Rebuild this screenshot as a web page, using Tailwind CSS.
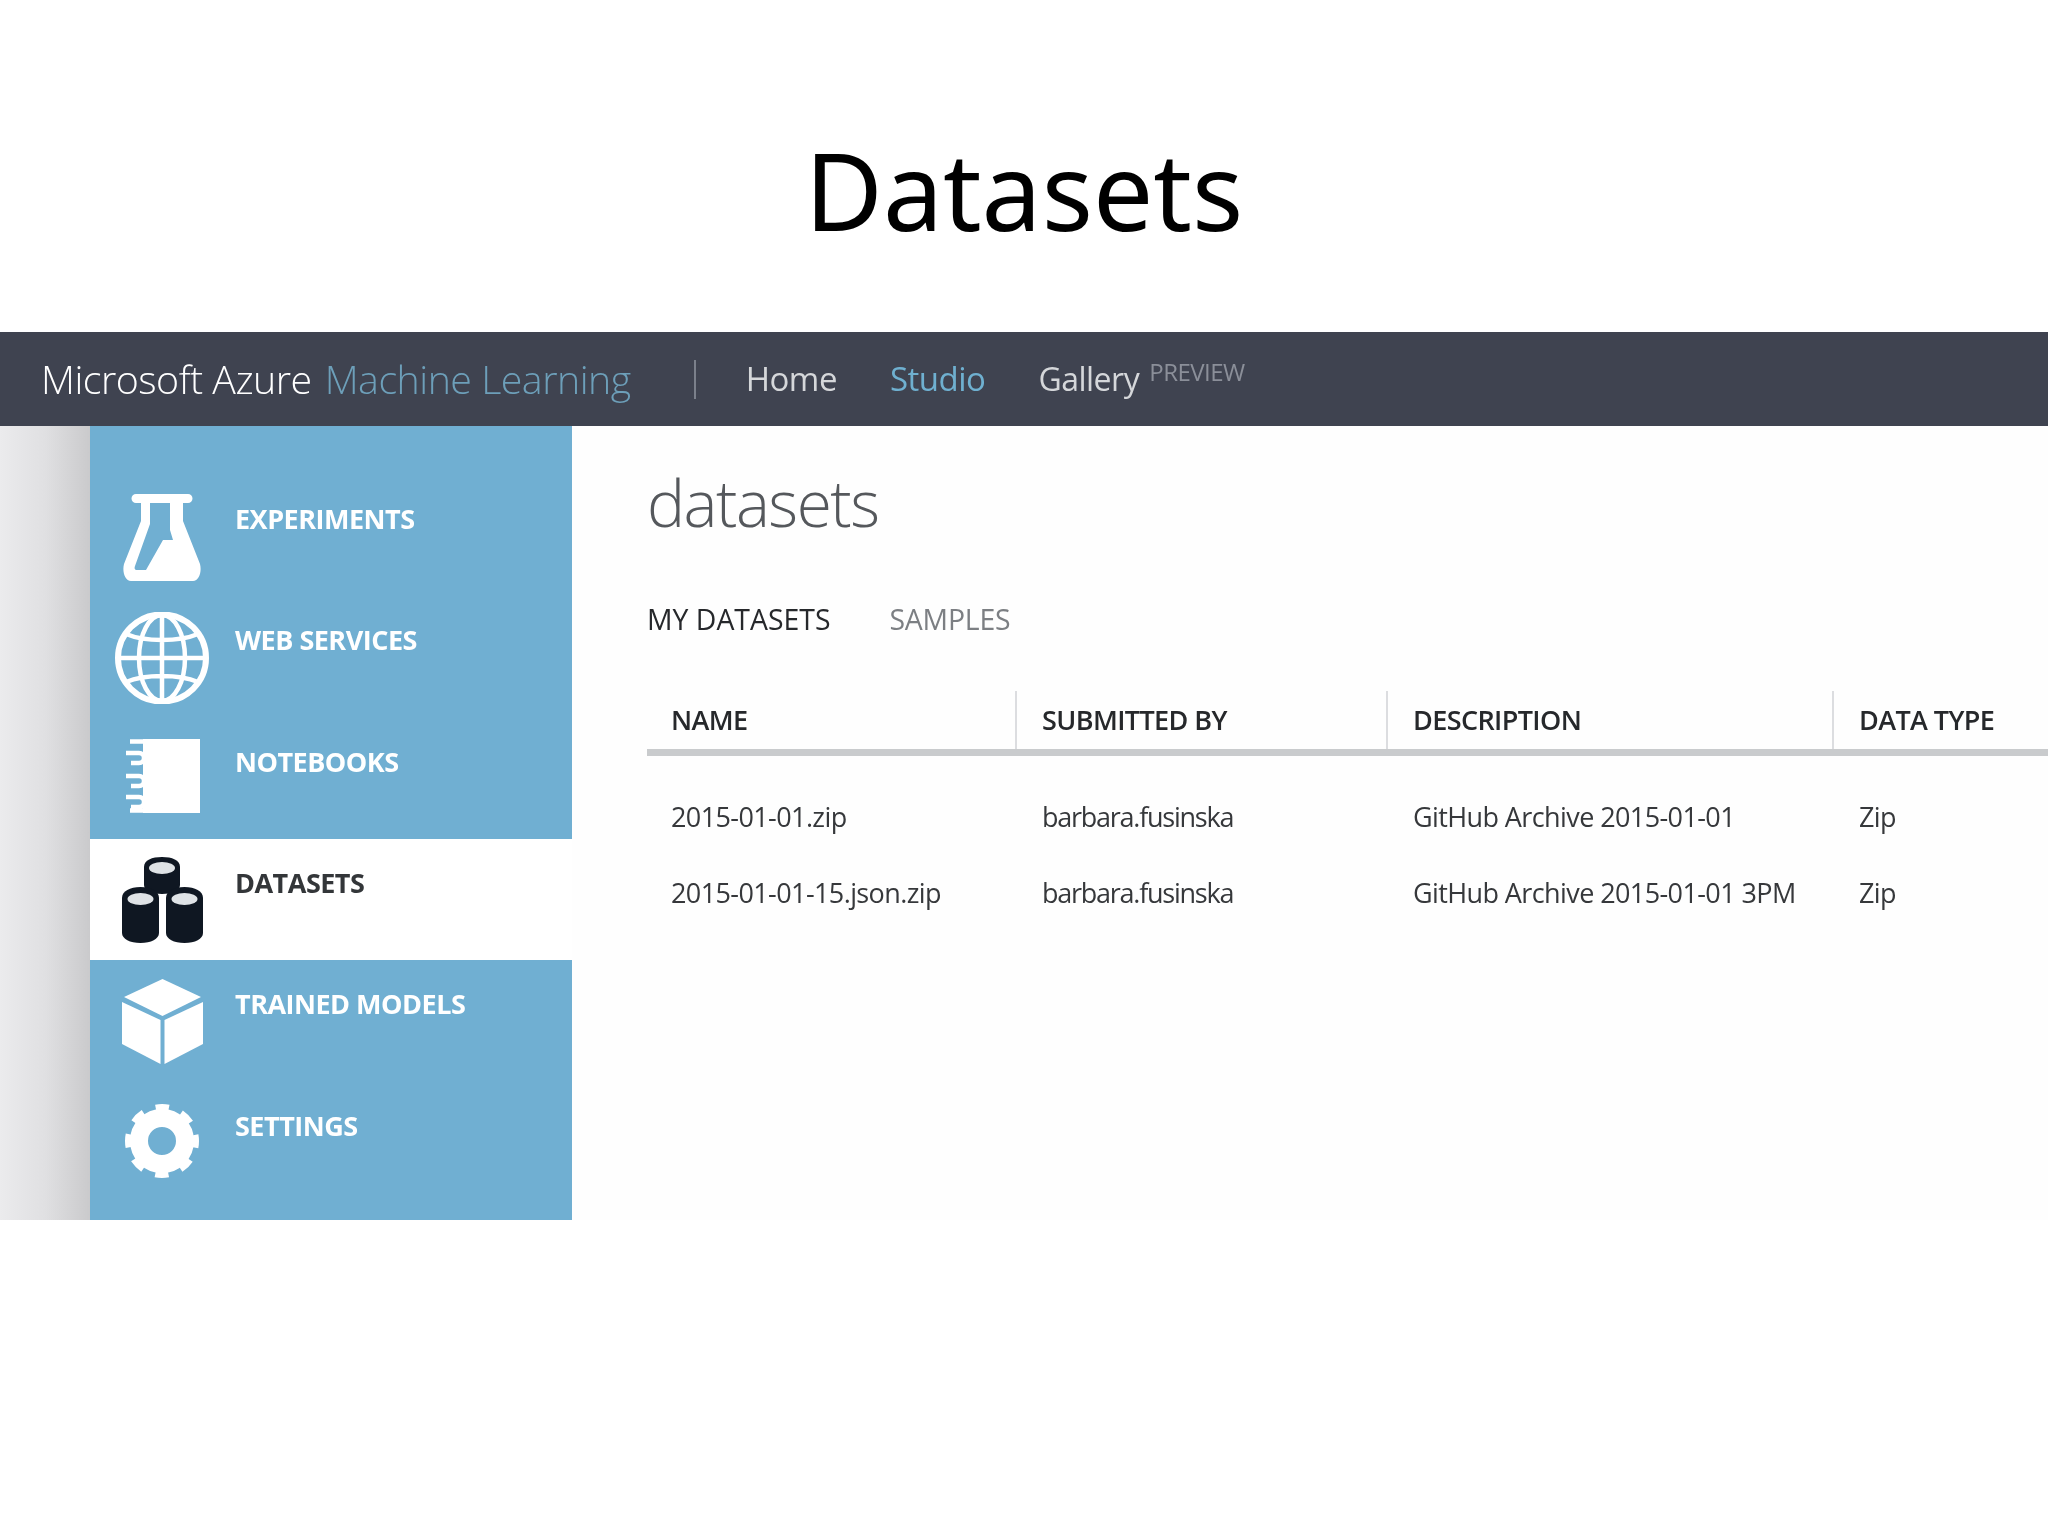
<!DOCTYPE html>
<html lang="en">
<head>
  <meta charset="UTF-8" />
  <title>Datasets</title>
  <script src="https://cdn.jsdelivr.net/npm/@tailwindcss/browser@4"></script>
</head>
<body class="bg-white w-[2048px] h-[1536px] overflow-hidden font-['Open_Sans',sans-serif]">

  <!-- slide title -->
  <header class="h-[332px] flex justify-center pt-[125px]">
    <h1 class="text-[107px] leading-[130px] text-black font-['Noto_Sans',sans-serif]">Datasets</h1>
  </header>

  <div class="blur-[0.6px]">
  <!-- top bar -->
  <nav class="h-[94px] bg-[#3f4350] flex items-center pl-[41px] text-[39.300px] font-light tracking-[-0.5px]">
    <span class="text-white">Microsoft Azure</span>
    <span class="ml-[13px] text-[#6d9fb9]">Machine Learning</span>
    <span class="ml-[63px] w-[2px] h-[39px] bg-[#7b808b]"></span>
    <span class="ml-[50px] text-[33px] font-normal text-[#d5d7da]">Home</span>
    <span class="ml-[53px] text-[33px] font-normal text-[#6fb0d0]">Studio</span>
    <span class="ml-[53px] text-[32px] font-normal text-[#d5d7da]">Gallery</span>
    <span class="ml-[10px] mb-[14px] text-[24px] font-normal text-[#8b8f99]">PREVIEW</span>
  </nav>

  <div class="flex h-[794px]">
    <div class="w-[90px] bg-linear-to-r from-[#ebebed] via-[#e0e0e2] to-[#cacacc]"></div>

    <!-- sidebar -->
    <aside class="w-[482px] bg-[#70afd2] pt-[49px] font-bold text-[27px] tracking-[-0.5px] text-white">
      <a class="h-[121px] flex items-start">
        <span class="w-[100px] h-[104px] mt-[10px] ml-[22px] flex items-center justify-center">
          <svg width="78" height="87" viewBox="0 0 78 87"><path fill="#fff" fill-rule="evenodd" d="M13 0H65a4 4 0 0 1 0 9H60V27L77 70c2 8-1 17-7 17H8c-6 0-9-9-7-17L18 27V9H13a4 4 0 0 1 0-9ZM27 9V30L12 72c-1 3 0 4 2 4H23L40 46H50L47 36V9Z"/></svg>
        </span>
        <span class="ml-[23px] mt-[24px]">EXPERIMENTS</span>
      </a>
      <a class="h-[122px] flex items-start">
        <span class="w-[100px] h-[104px] mt-[10px] ml-[22px] flex items-center justify-center">
          <svg width="94" height="92" viewBox="0 0 94 92" fill="none" stroke="#fff" stroke-width="4.5"><ellipse cx="47" cy="46" rx="44" ry="43.5" stroke-width="6"/><ellipse cx="47" cy="46" rx="23" ry="43"/><path d="M47 3V89M3 46H91M11 22C30 30 64 30 83 22M11 70C30 62 64 62 83 70"/></svg>
        </span>
        <span class="ml-[23px] mt-[24px]">WEB SERVICES</span>
      </a>
      <a class="h-[121px] flex items-start">
        <span class="w-[100px] h-[104px] mt-[6px] ml-[22px] flex items-center justify-center">
          <svg width="76" height="74" viewBox="0 0 76 74"><rect x="19" width="57" height="74" fill="#fff"/><path fill="none" stroke="#fff" stroke-width="4.5" d="M6 2.500H20M2 14H15a5 5 0 0 1 0 10H7M2 37H15a5 5 0 0 1 0 10H7M2 58H15a5 5 0 0 1 0 10H7M6 71.500H20"/></svg>
        </span>
        <span class="ml-[23px] mt-[24px]">NOTEBOOKS</span>
      </a>
      <a class="h-[121px] bg-white text-[#333639] flex items-start">
        <span class="w-[100px] h-[104px] mt-[9px] ml-[22px] flex items-center justify-center">
          <svg width="81" height="86" viewBox="0 0 81 86">
            <path fill="#0f1722" d="M22 10C22 3 30 0 40 0S58 3 58 10V28C58 34 50 37 40 37S22 34 22 28Z"/>
            <ellipse cx="40" cy="11" rx="13" ry="6" fill="#dfe3e6"/>
            <path fill="#0f1722" d="M0 41C0 34 8 30 18.500 30S37 34 37 41V76C37 82 29 86 18.500 86S0 82 0 76Z"/>
            <ellipse cx="18.500" cy="42" rx="13" ry="6" fill="#dfe3e6"/>
            <path fill="#0f1722" d="M44 41C44 34 52 30 62.500 30S81 34 81 41V76C81 82 73 86 62.500 86S44 82 44 76Z"/>
            <ellipse cx="62.500" cy="42" rx="13" ry="6" fill="#dfe3e6"/>
          </svg>
        </span>
        <span class="ml-[23px] mt-[24px]">DATASETS</span>
      </a>
      <a class="h-[122px] flex items-start">
        <span class="w-[100px] h-[104px] mt-[9px] ml-[22px] flex items-center justify-center">
          <svg width="81" height="85" viewBox="0 0 81 85" fill="#fff"><path d="M40.500 0 79 18 40.500 37 2 18Z"/><path d="M0 23 38.500 41V85L0 65Z"/><path d="M81 23 42.500 41V85L81 65Z"/></svg>
        </span>
        <span class="ml-[23px] mt-[24px]">TRAINED MODELS</span>
      </a>
      <a class="h-[121px] flex items-start">
        <span class="w-[100px] h-[104px] mt-[7px] ml-[22px] flex items-center justify-center">
          <svg width="74" height="74" viewBox="0 0 74 74" fill="none" stroke="#fff"><circle cx="37" cy="37" r="23" stroke-width="18"/><circle cx="37" cy="37" r="31" stroke-width="12" stroke-dasharray="12.170 12.170" stroke-dashoffset="6"/></svg>
        </span>
        <span class="ml-[23px] mt-[24px]">SETTINGS</span>
      </a>
    </aside>

    <!-- main content -->
    <main class="flex-1 pl-[75px] bg-[#fefefe]">
      <h2 class="mt-[33px] text-[64px] leading-[88px] font-light text-[#55585c] tracking-[-1.5px]">datasets</h2>
      <div class="mt-[53px] flex text-[28.400px] leading-[38px]">
        <span class="text-[#26282b]">MY DATASETS</span>
        <span class="ml-[59px] text-[#7c7f83] tracking-[-0.2px]">SAMPLES</span>
      </div>
      <div class="mt-[53px]">
        <div class="grid grid-cols-[370px_371px_446px_1fr] h-[65px] border-b-[7px] border-[#c9cbcd] text-[27px] font-semibold text-[#26282b] tracking-[-0.6px]">
          <div class="pl-[24px] pt-[9px] border-r-2 border-[#dcdde0]">NAME</div>
          <div class="pl-[25px] pt-[9px] border-r-2 border-[#dcdde0]">SUBMITTED BY</div>
          <div class="pl-[25px] pt-[9px] border-r-2 border-[#dcdde0]">DESCRIPTION</div>
          <div class="pl-[25px] pt-[9px]">DATA TYPE</div>
        </div>
        <div class="mt-[23px] grid grid-cols-[370px_371px_446px_1fr] auto-rows-[76px] items-center text-[27px] text-[#36383b] tracking-[-0.6px]">
          <div class="pl-[24px]">2015-01-01.zip</div>
          <div class="pl-[25px] tracking-[-1.25px]">barbara.fusinska</div>
          <div class="pl-[25px]">GitHub Archive 2015-01-01</div>
          <div class="pl-[25px]">Zip</div>
          <div class="pl-[24px]">2015-01-01-15.json.zip</div>
          <div class="pl-[25px] tracking-[-1.25px]">barbara.fusinska</div>
          <div class="pl-[25px]">GitHub Archive 2015-01-01 3PM</div>
          <div class="pl-[25px]">Zip</div>
        </div>
      </div>
    </main>
  </div>
  </div>

</body>
</html>
